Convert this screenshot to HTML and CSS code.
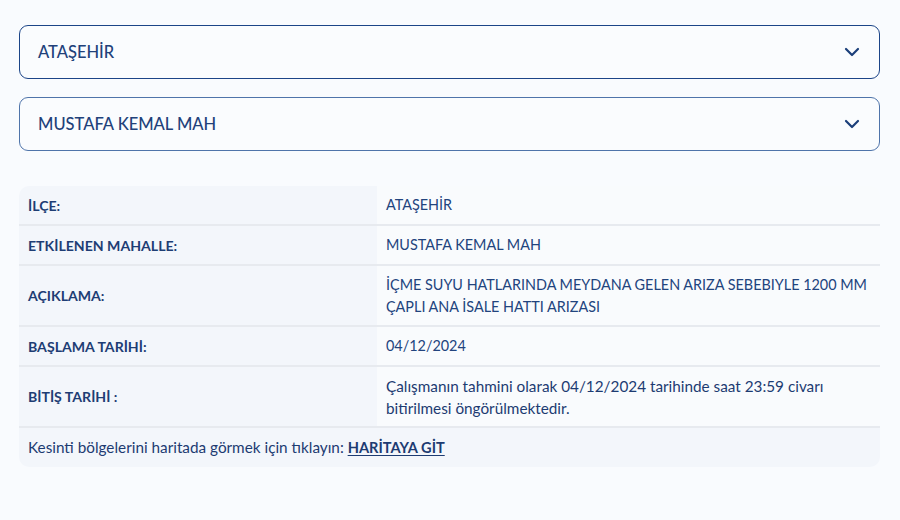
FILE: index.html
```html
<!doctype html>
<html lang="tr">
<head>
  <meta charset="UTF-8">
  <title>Kesinti Bilgisi</title>
  <link rel="stylesheet" href="styles.css">
</head>
<body>
  <div class="page">
    <div class="select select-dark">
      <span>ATAŞEHİR</span>
      <svg class="chev" width="16" height="10" viewBox="0 0 16 10"><path d="M2 2l6 6 6-6" fill="none" stroke="#1b3f7a" stroke-width="2.2" stroke-linecap="round" stroke-linejoin="round"/></svg>
    </div>
    <div class="select select-light">
      <span>MUSTAFA KEMAL MAH</span>
      <svg class="chev" width="16" height="10" viewBox="0 0 16 10"><path d="M2 2l6 6 6-6" fill="none" stroke="#1b3f7a" stroke-width="2.2" stroke-linecap="round" stroke-linejoin="round"/></svg>
    </div>

    <table class="info">
      <tr class="r1">
        <th>İLÇE:</th>
        <td>ATAŞEHİR</td>
      </tr>
      <tr class="r1">
        <th>ETKİLENEN MAHALLE:</th>
        <td>MUSTAFA KEMAL MAH</td>
      </tr>
      <tr class="r2">
        <th>AÇIKLAMA:</th>
        <td>İÇME SUYU HATLARINDA MEYDANA GELEN ARIZA SEBEBIYLE 1200 MM ÇAPLI ANA İSALE HATTI ARIZASI</td>
      </tr>
      <tr class="r1">
        <th>BAŞLAMA TARİHİ:</th>
        <td>04/12/2024</td>
      </tr>
      <tr class="r2">
        <th>BİTİŞ TARİHİ :</th>
        <td class="plain">Çalışmanın tahmini olarak 04/12/2024 tarihinde saat 23:59 civarı bitirilmesi öngörülmektedir.</td>
      </tr>
      <tr class="foot">
        <td colspan="2">Kesinti bölgelerini haritada görmek için tıklayın: <a href="#">HARİTAYA GİT</a></td>
      </tr>
    </table>
  </div>
</body>
</html>
```

FILE: styles.css
```css
*{margin:0;padding:0;box-sizing:border-box;}
body{background:#f9fbfe;font-family:Lato,"Noto Sans",sans-serif;color:#1d3b72;}
.page{padding:25px 20px 0 19px;}

.select{height:54px;
        display:flex;
        align-items:center;
        justify-content:space-between;
        padding:0 18px 0 18px;
        border-radius:9px;
        background:#fafcfe;
        font-size:16.5px;
        font-weight:500;
        color:#21417a;}
.select-dark{border:1.5px solid #1c4588;}
.select-light{border:1.5px solid #4f74aa;margin-top:18px;}
.chev{margin-right:1px;}

.info{width:861px;
      margin-top:35px;
      border-collapse:separate;
      border-spacing:0;
      border-radius:10px;
      overflow:hidden;
      font-size:14.4px;}
.info th{width:358px;
         text-align:left;
         font-weight:700;
         font-size:14.1px;
         background:#f3f6fb;
         color:#1e3d74;
         padding:0 9px;
         border-bottom:2px solid #e7eaef;}
.info td{background:#f9fbfd;
         color:#22447e;
         padding:0 9px 0 9px;
         line-height:22px;
         border-bottom:2px solid #e7eaef;}
.info td.plain{color:#1d3b72;font-size:15.3px;padding-right:40px;}
.info .r1 th,.info .r1 td{height:40px;}
.info .r2 th,.info .r2 td{height:61px;}
.info .foot td{background:#f3f6fb;height:39px;border-bottom:0;color:#1d3b72;font-size:15.3px;}
.info a{color:#1d3b72;font-weight:700;font-size:14.6px;text-decoration:underline;text-underline-offset:2px;}
```
